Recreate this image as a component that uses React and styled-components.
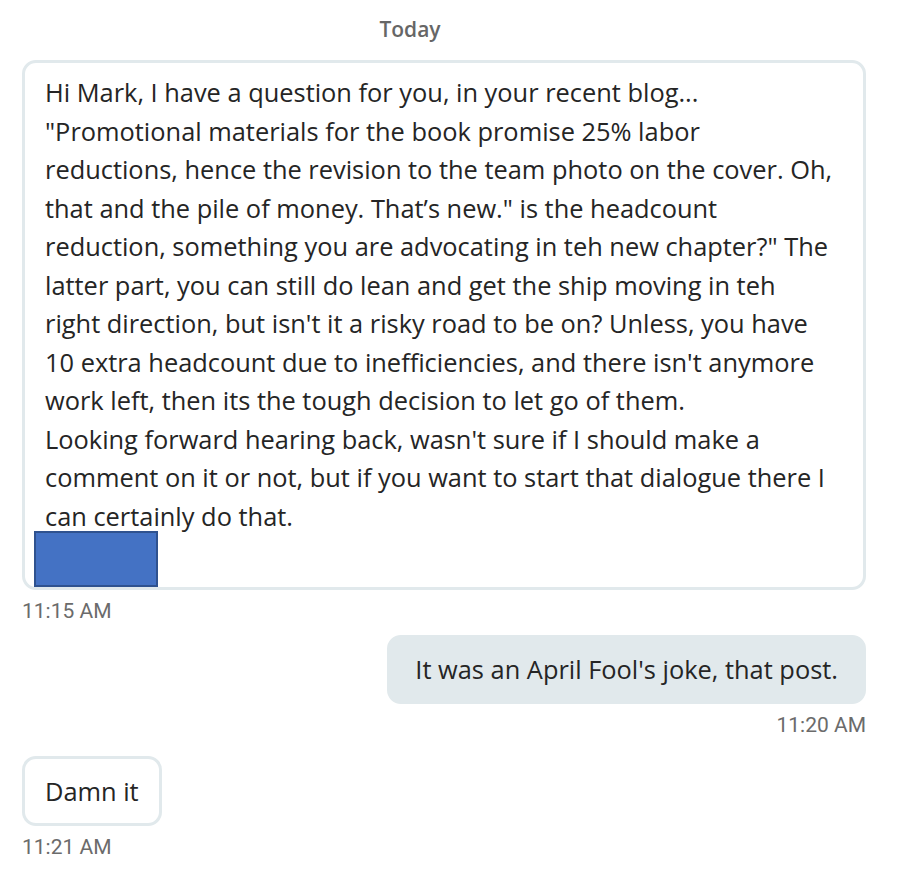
import React from "react";
import styled, { createGlobalStyle } from "styled-components";

const GlobalStyle = createGlobalStyle`
  html, body {
    margin: 0;
    padding: 0;
    background: #ffffff;
  }
  body {
    font-family: "Open Sans", "Noto Sans", sans-serif;
    color: #252525;
  }
`;

const Thread = styled.div`
  width: 906px;
  box-sizing: border-box;
  padding: 16px 40px 24px 22px;
  display: flex;
  flex-direction: column;
`;

const DayLabel = styled.div`
  align-self: center;
  margin-right: 68px;
  font-family: "Open Sans", sans-serif;
  font-weight: 600;
  font-size: 21px;
  line-height: 26px;
  color: #666666;
  margin-bottom: 18px;
`;

const Group = styled.div`
  display: flex;
  flex-direction: column;
  align-items: ${(p) => (p.$mine ? "flex-end" : "flex-start")};
  margin-bottom: ${(p) => p.$gap || 0}px;
`;

const Bubble = styled.div`
  box-sizing: border-box;
  border-radius: 14px;
  font-family: "Open Sans", "Noto Sans", sans-serif;
  font-size: 25.4px;
  line-height: 38.5px;
  color: #252525;
  border: 3px solid #e1e9ec;
  background: ${(p) => (p.$mine ? "#e1e9ec" : "#ffffff")};
  padding: ${(p) => p.$pad};
  width: ${(p) => p.$width || "auto"};
`;

const Line = styled.span`
  display: block;
  white-space: nowrap;
`;

const Attachment = styled.div`
  width: 124px;
  height: 56px;
  box-sizing: border-box;
  margin: -4px 0 0 -11px;
  background: #4472c4;
  border: 2px solid #2f528f;
`;

const Time = styled.div`
  font-family: Roboto, "Liberation Sans", sans-serif;
  font-size: 21px;
  line-height: 26px;
  color: #6b6b6b;
  margin-top: 8px;
`;

const longMessage = [
  "Hi Mark, I have a question for you, in your recent blog...",
  "\"Promotional materials for the book promise 25% labor",
  "reductions, hence the revision to the team photo on the cover. Oh,",
  "that and the pile of money. That\u2019s new.\" is the headcount",
  "reduction, something you are advocating in teh new chapter?\" The",
  "latter part, you can still do lean and get the ship moving in teh",
  "right direction, but isn't it a risky road to be on? Unless, you have",
  "10 extra headcount due to inefficiencies, and there isn't anymore",
  "work left, then its the tough decision to let go of them.",
  "Looking forward hearing back, wasn't sure if I should make a",
  "comment on it or not, but if you want to start that dialogue there I",
  "can certainly do that.",
];

export default function App() {
  return (
    <>
      <GlobalStyle />
      <Thread>
        <DayLabel>Today</DayLabel>

        <Group $gap={11}>
          <Bubble $width="100%" $pad="10px 16px 0 20px">
            {longMessage.map((t, i) => (
              <Line key={i}>{t}</Line>
            ))}
            <Attachment />
          </Bubble>
          <Time>11:15 AM</Time>
        </Group>

        <Group $mine $gap={18}>
          <Bubble $mine $pad="12px 25px">
            It was an April Fool's joke, that post.
          </Bubble>
          <Time>11:20 AM</Time>
        </Group>

        <Group>
          <Bubble $pad="13px 20px">Damn it</Bubble>
          <Time>11:21 AM</Time>
        </Group>
      </Thread>
    </>
  );
}
